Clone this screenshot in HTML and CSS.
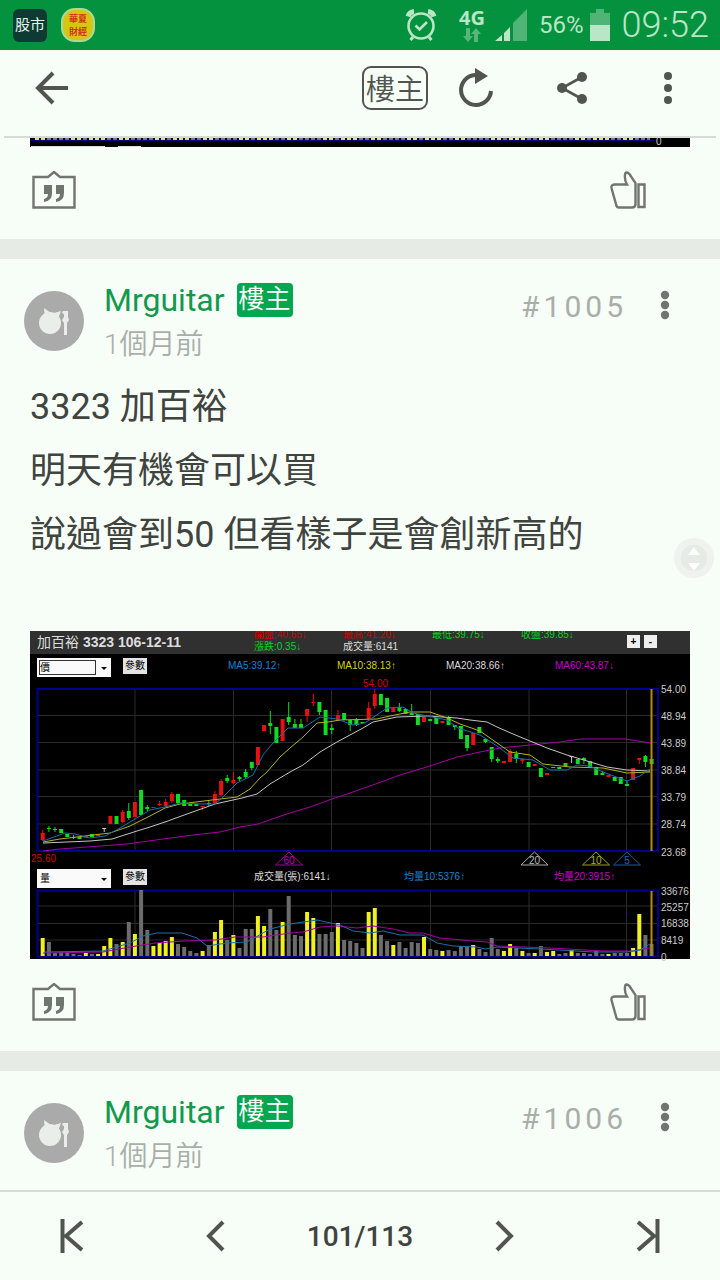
FILE: index.html
```html
<!DOCTYPE html>
<html lang="zh-Hant">
<head>
    <meta charset="UTF-8">
    <meta name="viewport" content="width=device-width, initial-scale=1.0">
    <title>3323 加百裕</title>
    <link rel="stylesheet" href="styles.css">
</head>
<body>

<!-- Status bar -->
<div class="status-bar">
    <span class="app-stock">股市</span>
    <span class="app-finance">華夏<br>財經</span>
    <div class="status-right">
        <svg class="alarm" width="32" height="34" viewBox="0 0 32 34" fill="none" stroke="#b9e6c5">
            <circle cx="16" cy="18" r="12.5" stroke-width="2.6"/>
            <path d="M10.500 17.500l4 4 7.500-7.500" stroke-width="2.600"/>
            <path d="M3 8.500a7 7 0 0 1 6-5M29 8.500a7 7 0 0 0-6-5" stroke-width="5"/>
            <path d="M8 29l-2.500 3M24 29l2.500 3" stroke-width="3"/>
        </svg>
        <div class="network">
            <span>4G</span>
            <svg width="18" height="15" viewBox="0 0 18 15" fill="#57b77a">
                <path d="M3 0h4v8h3l-5 6-5-6h3z"/>
                <path d="M11 14h4V6h3l-5-6-5 6h3z"/>
            </svg>
        </div>
        <svg class="signal" width="32" height="32" viewBox="0 0 32 32">
            <path d="M0 32l7-6v6zM9 24l6-6v14H9z" fill="#b9e6c5"/>
            <path d="M18 14L32 0v32H18z" fill="#4fb475"/>
        </svg>
        <span class="percent">56%</span>
        <svg class="battery" width="20" height="32" viewBox="0 0 20 32">
            <path d="M6 0h8v4h6v28H0V4h6z" fill="#4fb475"/>
            <path d="M0 16h20v16H0z" fill="#b9e6c5"/>
        </svg>
        <span class="clock">09:52</span>
    </div>
</div>

<!-- Toolbar -->
<header class="toolbar">
    <button class="back" aria-label="返回">
        <svg width="34" height="34" viewBox="0 0 34 34" fill="none" stroke="#50554f" stroke-width="4">
            <path d="M33 17H4M18 2L3 17l15 15"/>
        </svg>
    </button>
    <button class="owner-only">樓主</button>
    <button class="tool" aria-label="重新整理">
        <svg width="36" height="40" viewBox="0 0 36 40">
            <path d="M20 7h-3a15 15 0 1 0 16 16" fill="none" stroke="#50554f" stroke-width="4"/>
            <path d="M17 0l13 8-13 8z" fill="#50554f"/>
        </svg>
    </button>
    <button class="tool" aria-label="分享">
        <svg width="30" height="32" viewBox="0 0 30 32" fill="#50554f">
            <path d="M25 5L5 16l20 11" fill="none" stroke="#50554f" stroke-width="2.600"/>
            <circle cx="25" cy="5" r="5"/><circle cx="5" cy="16" r="5"/><circle cx="25" cy="27" r="5"/>
        </svg>
    </button>
    <button class="tool" aria-label="更多">
        <svg width="8" height="32" viewBox="0 0 8 32" fill="#50554f">
            <circle cx="4" cy="4" r="4"/><circle cx="4" cy="16" r="4"/><circle cx="4" cy="28" r="4"/>
        </svg>
    </button>
</header>

<main class="thread">
    <article class="post">
        <!-- bottom edge of the previous chart -->
        <div class="post-image">
            <svg viewBox="30 138 660 9">
                <rect x="30" y="138" width="660" height="9" fill="#000"/>
                <path d="M35 139H650" stroke="#77778a" stroke-width="2" stroke-dasharray="4 2"/>
                <path d="M35 139H650" stroke="#dde070" stroke-width="2" stroke-dasharray="4 2 4 26 4 2 4 8 4 2 4 2 4 14"/>
                <path d="M30 140.500H654" stroke="#0a0a80"/>
                <path d="M31 147H105M118 147H141" stroke="#ddd" stroke-width="2"/>
                <text x="656" y="145" class="axis">0</text>
            </svg>
        </div>
        <div class="actions">
            <button aria-label="引用">
                <svg width="44" height="38" viewBox="0 0 44 38">
                    <path d="M1.500 6h14.500l6-5 6 5h14.500v30.500H1.500z" fill="none" stroke="#70756f" stroke-width="2.400"/>
                    <path d="M12 14h8v8q0 8-8 9v-3q4-1 4-5h-4zM24 14h8v8q0 8-8 9v-3q4-1 4-5h-4z" fill="#70756f"/>
                </svg>
            </button>
            <button aria-label="讚">
                <svg width="36" height="38" viewBox="0 0 36 38" fill="none" stroke="#70756f" stroke-width="2.400">
                    <path d="M5 13.500h12c-3-5-2.500-12-.5-12s4 3 4.500 4l4.500 6.500v21q0 3.500-3.500 3.500H9q-2 0-2.500-1.500L1.500 17q-.5-3.500 3.500-3.500z"/>
                    <path d="M28.500 13.500h6V36h-6z"/>
                </svg>
            </button>
        </div>
    </article>

    <article class="post">
        <div class="post-head">
            <svg class="avatar" viewBox="0 0 60 60">
                <circle cx="30" cy="30" r="30" fill="#aaa"/>
                <circle cx="26" cy="32" r="11" fill="#eaeeea"/>
                <path d="M20 17l7 5-6 5zM37 20l-7 2 4 6zM39 20h5v6l1 3-2 3v12h-3V32l-2-3 2-3v-3l-2-1z" fill="#eaeeea"/>
            </svg>
            <div class="who">
                <div class="name-row"><a href="#">Mrguitar</a><span class="badge">樓主</span></div>
                <time>1個月前</time>
            </div>
            <span class="floor">#1005</span>
            <button class="post-menu" aria-label="更多">
                <svg width="10" height="30" viewBox="0 0 10 30" fill="#70756f">
                    <circle cx="5" cy="5" r="4.200"/><circle cx="5" cy="15" r="4.200"/><circle cx="5" cy="25" r="4.200"/>
                </svg>
            </button>
        </div>
        <div class="post-text">
            <p>3323 加百裕</p>
            <p>明天有機會可以買</p>
            <p>說過會到50 但看樣子是會創新高的</p>
            <p><br></p>
        </div>

        <div class="post-image stock">
            <div class="stock-head">
                <strong>加百裕 <b>3323 106-12-11</b></strong>
                <div class="quotes">
                    <span class="red">開盤:40.65↓</span>
                    <span class="red">最高:41.20↓</span>
                    <span class="green">最低:39.75↓</span>
                    <span class="green">收盤:39.85↓</span>
                    <span class="green">漲跌:0.35↓</span>
                    <span class="white">成交量:6141</span>
                </div>
                <button>+</button>
                <button>-</button>
            </div>
            <div class="stock-row">
                <label class="picker focused"><select aria-label="價格指標"><option>價</option></select></label>
                <button>參數</button>
                <div class="averages">
                    <span class="blue">MA5:39.12↑</span>
                    <span class="yellow">MA10:38.13↑</span>
                    <span class="white">MA20:38.66↑</span>
                    <span class="magenta">MA60:43.87↓</span>
                </div>
            </div>
            <svg viewBox="30 678 660 190">
                <path class="grid" d="M38 715.500H658M38 742.500H658M38 770H658M38 796.500H658M38 824H658M135 689V851M233.500 689V851M331.500 689V851M430.500 689V851M529 689V851M626.500 689V851"/>
                <path class="frame" d="M37.500 689H658V851H37.500z"/>
                <g id="candles"></g>
                <path class="ma magenta-line" d="M43 851L60 849 100 846 127 844 163 839 193 835 220 832 240 827 258 824 275 818 290 813 310 807 332 799 350 793 370 786 400 775 430 766 457 757 480 752 500 748 530 745 560 742 580 739 625 739 651 743"/>
                <path class="ma white-line" d="M43 843L90 841 112 839 137 831 150 827 165 822 187 814 215 804 242 798 257 794 270 784 290 772 303 765 320 752 337 742 363 728 373 722 397 717 427 716 457 718 470 720 487 722 497 727 513 734 530 741 547 748 567 755 587 761 607 767 627 770 650 771"/>
                <path class="ma yellow-line" d="M43 842L60 839 85 836 110 833 130 826 150 816 165 808 180 804 220 799 237 797 250 789 260 778 267 772 280 757 290 748 303 737 317 723 328 722 340 720 377 719 390 716 410 712 430 712 447 718 460 724 480 731 497 743 510 752 530 755 543 764 570 767 603 768 627 773 650 772"/>
                <path class="ma blue-line" d="M43 841L65 833 75 834 90 838 105 836 120 828 130 822 150 810 165 807 180 803 200 804 215 804 222 798 237 783 253 775 263 755 273 743 288 728 303 728 320 717 337 719 353 725 365 723 387 708 403 707 413 713 447 720 458 728 480 735 497 746 513 758 533 760 550 770 567 770 577 765 590 766 603 772 627 781 640 776 650 769"/>
                <path class="cursor" d="M651.500 689V851"/>
                <g class="axis">
                    <text x="661" y="693">54.00</text>
                    <text x="661" y="720">48.94</text>
                    <text x="661" y="747">43.89</text>
                    <text x="661" y="774">38.84</text>
                    <text x="661" y="801">33.79</text>
                    <text x="661" y="828">28.74</text>
                    <text x="661" y="856">23.68</text>
                </g>
                <g class="extreme">
                    <text x="363" y="687">54.00</text>
                    <text x="31" y="862">25.60</text>
                </g>
                <g class="marker">
                    <g stroke="#a000a0" fill="#c000c0"><path d="M289 852l13.500 13h-27z"/><text x="289" y="864">60</text></g>
                    <g stroke="#aaa" fill="#bbb"><path d="M534.500 852l13.500 13h-27z"/><text x="534.500" y="864">20</text></g>
                    <g stroke="#a0a018" fill="#b0b020"><path d="M596 852l13.500 13h-27z"/><text x="596" y="864">10</text></g>
                    <g stroke="#14609c" fill="#1a70b4"><path d="M627 852l13.500 13h-27z"/><text x="627" y="864">5</text></g>
                </g>
            </svg>
            <div class="stock-row volume">
                <label class="picker"><select aria-label="成交量指標"><option>量</option></select></label>
                <button>參數</button>
                <div class="averages">
                    <span class="white">成交量(張):6141↓</span>
                    <span class="blue">均量10:5376↑</span>
                    <span class="magenta">均量20:3915↑</span>
                </div>
            </div>
            <svg class="volume-chart" viewBox="30 889 660 70">
                <path class="grid" d="M38 906H658M38 923.500H658M38 940H658M135 890V956M233.500 890V956M331.500 890V956M430.500 890V956M529 890V956M626.500 890V956"/>
                <path class="frame" d="M37.500 890.500H658V956.500H37.500z"/>
                <g id="volumes"></g>
                <path class="ma magenta-line" d="M43 953L103 952 130 947 155 943 185 941 215 940 235 937 263 937 290 933 303 932 320 927 337 926 357 928 373 926 393 929 410 933 423 933 440 938 473 941 487 942 497 946 550 948 603 951 633 951 650 948"/>
                <path class="ma blue-line" d="M45 952L103 951 130 943 143 936 157 933 182 933 197 938 207 946 227 943 247 942 270 929 290 924 317 920 340 925 353 931 370 933 383 931 400 935 423 935 437 943 453 946 477 947 485 949 497 947 540 949 593 952 627 952 640 950 650 944"/>
                <path class="cursor" d="M651.500 891V956"/>
                <g class="axis">
                    <text x="661" y="895">33676</text>
                    <text x="661" y="911">25257</text>
                    <text x="661" y="927">16838</text>
                    <text x="661" y="944">8419</text>
                    <text x="661" y="961">0</text>
                </g>
            </svg>
        </div>

        <div class="actions">
            <button aria-label="引用">
                <svg width="44" height="38" viewBox="0 0 44 38">
                    <path d="M1.500 6h14.500l6-5 6 5h14.500v30.500H1.500z" fill="none" stroke="#70756f" stroke-width="2.400"/>
                    <path d="M12 14h8v8q0 8-8 9v-3q4-1 4-5h-4zM24 14h8v8q0 8-8 9v-3q4-1 4-5h-4z" fill="#70756f"/>
                </svg>
            </button>
            <button aria-label="讚">
                <svg width="36" height="38" viewBox="0 0 36 38" fill="none" stroke="#70756f" stroke-width="2.400">
                    <path d="M5 13.500h12c-3-5-2.500-12-.5-12s4 3 4.500 4l4.500 6.500v21q0 3.500-3.500 3.500H9q-2 0-2.500-1.500L1.500 17q-.5-3.500 3.500-3.500z"/>
                    <path d="M28.500 13.500h6V36h-6z"/>
                </svg>
            </button>
        </div>
    </article>

    <article class="post">
        <div class="post-head">
            <svg class="avatar" viewBox="0 0 60 60">
                <circle cx="30" cy="30" r="30" fill="#aaa"/>
                <circle cx="26" cy="32" r="11" fill="#eaeeea"/>
                <path d="M20 17l7 5-6 5zM37 20l-7 2 4 6zM39 20h5v6l1 3-2 3v12h-3V32l-2-3 2-3v-3l-2-1z" fill="#eaeeea"/>
            </svg>
            <div class="who">
                <div class="name-row"><a href="#">Mrguitar</a><span class="badge">樓主</span></div>
                <time>1個月前</time>
            </div>
            <span class="floor">#1006</span>
            <button class="post-menu" aria-label="更多">
                <svg width="10" height="30" viewBox="0 0 10 30" fill="#70756f">
                    <circle cx="5" cy="5" r="4.200"/><circle cx="5" cy="15" r="4.200"/><circle cx="5" cy="25" r="4.200"/>
                </svg>
            </button>
        </div>
    </article>

    <button class="scroll-knob" aria-label="捲動">
        <svg width="44" height="44" viewBox="0 0 44 44">
            <circle cx="22" cy="22" r="20" fill="#eceeec"/>
            <circle cx="22" cy="22" r="14" fill="#dfe4df" stroke="#f2f4f2"/>
            <path d="M22 11l6 8H16zM22 35l6-8H16z" fill="#fff"/>
        </svg>
    </button>
</main>

<!-- Pager -->
<nav class="pager">
    <button aria-label="第一頁">
        <svg width="24" height="36" viewBox="0 0 24 36"><path d="M2.500 1v34M22 4L6 18l16 14"/></svg>
    </button>
    <button aria-label="上一頁">
        <svg width="24" height="36" viewBox="0 0 24 36"><path d="M19 4L5 18l14 14"/></svg>
    </button>
    <span>101/113</span>
    <button aria-label="下一頁">
        <svg width="24" height="36" viewBox="0 0 24 36"><path d="M5 4l14 14L5 32"/></svg>
    </button>
    <button aria-label="最後頁">
        <svg width="24" height="36" viewBox="0 0 24 36"><path d="M21.500 1v34M2 4l16 14L2 32"/></svg>
    </button>
</nav>

<script src="chart.js"></script>
</body>
</html>
```

FILE: styles.css
```css
:root {
    --bg: #f7fdf7;
    --green: #04923f;
    --badge: #05a650;
    --icon: #50554f;
    --line: #d6dbd6;
    --text: #3f443f;
    --muted: #a9aea9;
}

* {
    box-sizing: border-box;
}

body {
    margin: 0;
    height: 100vh;
    display: flex;
    flex-direction: column;
    background-color: var(--bg);
    color: var(--text);
    font-family: Roboto, "Noto Sans CJK TC", sans-serif;
}

button {
    border: none;
    background: none;
    padding: 0;
    font-family: inherit;
    color: inherit;
    cursor: pointer;
}

svg {
    display: block;
}

/* Status bar */
.status-bar {
    flex: none;
    display: flex;
    align-items: center;
    height: 50px;
    padding: 0 11px 0 13px;
    background-color: var(--green);
    color: #b9e6c5;
}

.app-stock {
    width: 34px;
    height: 33px;
    border-radius: 6px;
    background-color: #0d3b34;
    color: #e4f4e8;
    font-size: 15px;
    line-height: 32px;
    text-align: center;
}

.app-finance {
    width: 34px;
    height: 34px;
    margin-left: 14px;
    padding-top: 2px;
    border: 2px solid #a5dc9a;
    border-radius: 14px;
    background-color: #d8c414;
    color: #d4301c;
    font-family: "Noto Sans CJK TC", sans-serif;
    font-size: 9px;
    font-weight: bold;
    line-height: 13px;
    text-align: center;
}

.status-right {
    display: flex;
    align-items: center;
    margin-left: auto;
}

.network {
    display: flex;
    flex-direction: column;
    align-items: center;
    margin: 0 10px 0 22px;
    font-family: "Noto Sans", sans-serif;
    font-size: 20px;
    font-weight: bold;
    line-height: 20px;
}

.percent {
    margin: 0 6px 0 12px;
    font-size: 24px;
}

.clock {
    margin-left: 12px;
    font-size: 36px;
    font-weight: 300;
}

/* Toolbar */
.toolbar {
    flex: none;
    display: flex;
    align-items: center;
    height: 88px;
    margin: 0 4px;
    padding-bottom: 10px;
    border-bottom: 2px solid var(--line);
}

.back {
    display: flex;
    justify-content: center;
    width: 96px;
    margin-right: auto;
}

.owner-only {
    width: 66px;
    height: 44px;
    padding-top: 4px;
    border: 2px solid var(--icon);
    border-radius: 9px;
    color: var(--icon);
    font-size: 29px;
    font-weight: 350;
    line-height: 36px;
}

.tool {
    display: flex;
    justify-content: center;
    width: 96px;
}

/* Thread */
.thread {
    flex: 1;
    min-height: 0;
    overflow: hidden;
    position: relative;
}

.post + .post {
    border-top: 20px solid #e6ebe5;
}

.post-head {
    display: flex;
    align-items: flex-start;
    height: 116px;
    padding: 24px 50px 0 24px;
}

.avatar {
    width: 60px;
    height: 60px;
    margin: 8px 20px 0 0;
}

.who {
    flex: 1;
}

.name-row {
    display: flex;
    align-items: center;
    gap: 12px;
    height: 34px;
}

.name-row a {
    color: #119a4b;
    font-size: 32px;
    text-decoration: none;
}

.badge {
    width: 56px;
    height: 34px;
    border-radius: 4px;
    background-color: var(--badge);
    color: #fff;
    font-size: 26px;
    font-weight: 350;
    line-height: 32px;
    text-align: center;
}

time {
    display: block;
    margin-top: 8px;
    color: var(--muted);
    font-size: 28px;
    font-weight: 350;
    line-height: 40px;
}

.floor {
    color: var(--muted);
    font-size: 30px;
    letter-spacing: 4px;
    line-height: 48px;
}

.post-menu {
    margin: 7px 0 0 33px;
}

.post-text {
    padding: 0 30px;
    font-size: 36px;
    line-height: 64px;
}

.post-text p {
    margin: 0;
}

.actions {
    display: flex;
    justify-content: space-between;
    align-items: center;
    height: 92px;
    padding: 0 74px 6px 32px;
}

.post-image {
    margin: 0 30px;
}

.scroll-knob {
    position: absolute;
    right: 4px;
    top: 398px;
    opacity: 0.7;
}

/* Stock chart */
.stock {
    background-color: #000;
    font-family: "Liberation Sans", "Noto Sans CJK TC", sans-serif;
    font-size: 10px;
}

.stock-head {
    display: flex;
    align-items: flex-start;
    gap: 4px;
    height: 23px;
    padding: 4px 33px 0 7px;
    background-color: #303030;
    overflow: hidden;
}

.stock-head strong {
    width: 213px;
    color: #ddd;
    font-size: 14px;
    font-weight: normal;
    line-height: 14px;
}

.stock-head b {
    font-weight: bold;
}

.quotes {
    flex: 1;
    display: grid;
    grid-template-columns: repeat(4, 89px);
    margin-top: -6px;
    line-height: 12px;
    white-space: nowrap;
}

.stock-head button {
    width: 13px;
    height: 13px;
    background-color: #eee;
    color: #000;
    font-size: 10px;
    font-weight: bold;
    line-height: 13px;
}

.stock-row {
    display: flex;
    align-items: flex-start;
    height: 24px;
    padding: 4px 26px 0 7px;
}

.stock-row.volume {
    height: 21px;
    padding: 1px 0 0 7px;
}

.picker {
    position: relative;
    width: 74px;
    height: 19px;
    padding: 2px;
    background-color: #fafafa;
}

.picker::after {
    content: "";
    position: absolute;
    right: 4px;
    top: 9px;
    border: 3px solid transparent;
    border-top-color: #000;
}

.picker select {
    display: block;
    width: 57px;
    height: 15px;
    padding: 0;
    border: 1px solid transparent;
    appearance: none;
    background: none;
    color: #000;
    font-family: inherit;
    font-size: 10px;
    line-height: 13px;
}

.picker.focused select {
    border-color: #333;
}

.stock-row button {
    width: 24px;
    height: 16px;
    margin-left: 12px;
    background-color: #e4e4e4;
    color: #000;
    font-size: 10px;
    line-height: 16px;
}

.averages {
    flex: 1;
    display: grid;
    grid-template-columns: repeat(4, 1fr);
    margin-left: 81px;
    line-height: 15px;
    white-space: nowrap;
}

.volume .averages {
    grid-template-columns: 150px 150px 1fr;
    margin-left: 107px;
}

.volume-chart {
    overflow: visible;
}

.red { color: #d40000; }
.green { color: #00d420; }
.white { color: #ddd; }
.blue { color: #1684d0; }
.yellow { color: #d4d420; }
.magenta { color: #c800c8; }

.grid {
    fill: none;
    stroke: #2a2a2a;
}

.frame {
    fill: none;
    stroke: #000090;
    stroke-width: 2;
}

.ma {
    fill: none;
    stroke-width: 1;
}

.magenta-line { stroke: #a400a4; }
.white-line { stroke: #c4c4c4; }
.yellow-line { stroke: #b4b420; }
.blue-line { stroke: #1a70ac; }

.cursor {
    stroke: #b48a10;
    stroke-width: 2;
}

.axis, .extreme {
    fill: #ccc;
    font-family: "Liberation Sans", sans-serif;
    font-size: 10px;
}

.extreme {
    fill: #d40000;
}

.marker path {
    fill: none;
}

.marker text {
    stroke: none;
    font-size: 10px;
    text-anchor: middle;
}

/* Pager */
.pager {
    flex: none;
    display: flex;
    align-items: center;
    height: 90px;
    border-top: 2px solid var(--line);
}

.pager button, .pager span {
    flex: 1;
    display: flex;
    justify-content: center;
}

.pager span {
    font-size: 28px;
    font-weight: 500;
}

.pager path {
    fill: none;
    stroke: var(--icon);
    stroke-width: 4;
}
```

FILE: chart.js
```javascript
const COLORS = { r: '#e81010', g: '#10dc20', w: '#cccccc', y: '#f0f020', d: '#6c6c6c' };
const START = 42.7;
const STEP = 6.15;

// colour, body top, body bottom, wick top, wick bottom
const candles = `r833-840-830-841 g828-829-826-832 g829-830-827-832 g829-833 g834-837 g837-838-835-839
g837-839 r836-838 g834-837 r834-836 w828-829-828-832 r816-824 g816-824 r812-822-810-823 g811-818-803-820
r802-817 g790-815 g807-809-805-811 r807-808 r804-805-801-806 r802-806-799-807 r794-801-792-803 g794-803
g800-806 g804-806 g804-806 r806-807-806-810 g803-804-800-806 r794-803-791-804 r781-795-779-796
g778-781-775-783 r780-783-772-784 g777-779-776-781 g772-777-769-779 g762-768-762-770 r747-765 r725-731
g723-726-711-734 g727-743 r719-741 g717-722-702-725 g724-728-719-728 g724-728-719-728 r709-716-709-722
r702-703-694-706 g702-712-702-715 g710-735 g728-730-724-734 r715-721-710-721 g713-720 g720-725-720-731
g720-725-718-726 g722-723 r708-719-702-719 r694-706-689-709 g694-705 g698-712 r708-712 g707-711-703-712
g709-714 g713-715-704-715 g714-725 r717-722 g719-721 g718-724 r721-723 g718-725-716-725 g725-727-725-730
g726-739 g735-748-735-751 r733-745 g727-733 g739-742-738-743 g747-759-747-762 g759-761-757-763 r761-763
r751-762-749-762 g754-759-751-763 r759-761-758-764 g762-767 r764-766 g768-777 r773-775 g767-768
g767-769 g763-766 w756-757-756-763 g759-764 g758-760-757-764 g761-767 g767-775 g773-775-771-775
r775-777 g777-781 g777-784 g784-786-781-786 r768-780 r758-760-758-764 g756-762-755-767
g759-764`.split(/\s+/);

const volumes = `y18 d14 d3 d4 d4 d2 d1 y3 d2 y2 y10 y18 d12 y14 d34 y22 d66 d26 y10 y13 y15 y19 d12 d9 d5
d3 y5 d11 y24 y36 d16 y21 d8 d27 d27 y40 y30 d47 d26 y34 d60 d21 d20 y44 y38 d22 d22 d24 y33 d16 d15 d13
d8 y44 y48 d21 d15 y11 d14 d8 d14 d13 y19 d7 d6 y5 d6 d5 d10 d9 y11 d7 d4 d18 d7 y5 y12 d8 y5 d3 y3 d10
y4 y5 d2 d3 y6 d3 d3 d2 d5 d2 y2 d3 d3 d3 y8 y42 d21 d12`.split(/\s+/);

function addLine(group, x, top, bottom, color, width) {
    const line = document.createElementNS('http://www.w3.org/2000/svg', 'path');
    line.setAttribute('d', `M${x.toFixed(1)} ${top}V${bottom}`);
    line.setAttribute('stroke', color);
    line.setAttribute('stroke-width', width);
    group.appendChild(line);
}

candles.forEach((item, i) => {
    const group = document.getElementById('candles');
    const [top, bottom, high, low] = item.slice(1).split('-');
    const x = START + STEP * i;
    addLine(group, x, top, bottom, COLORS[item[0]], 4);
    if (high) addLine(group, x, high, low, COLORS[item[0]], 1);
});

volumes.forEach((item, i) => {
    const group = document.getElementById('volumes');
    addLine(group, START + STEP * i, 956 - item.slice(1), 956, COLORS[item[0]], 4);
});
```
